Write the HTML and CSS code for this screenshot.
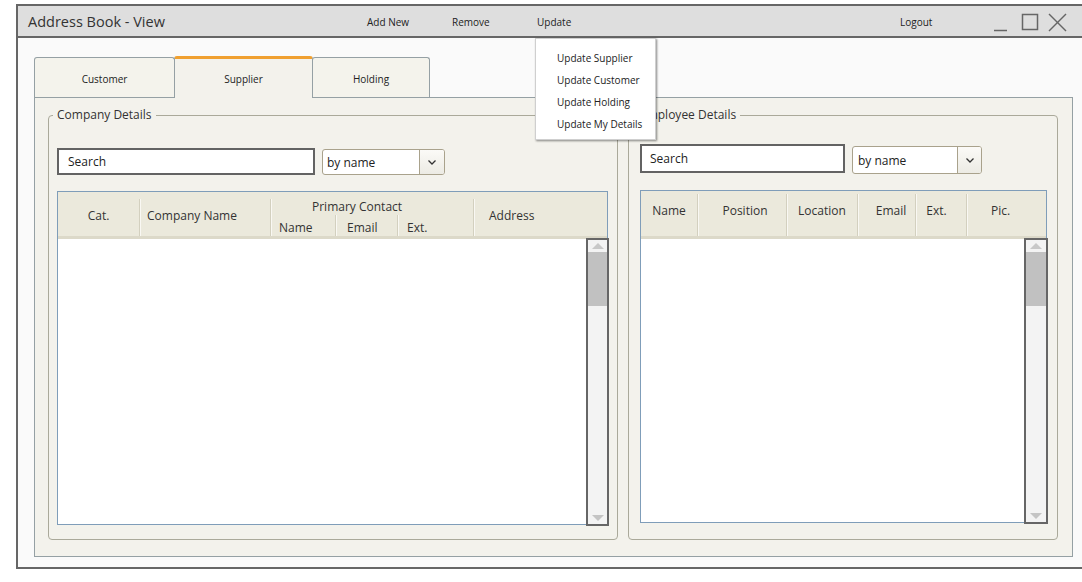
FILE: index.html
```html
<!DOCTYPE html>
<html lang="en">
<head>
<meta charset="utf-8">
<title>Address Book - View</title>
<link rel="stylesheet" href="styles.css">
</head>
<body>
<div class="window">
  <header class="titlebar">
    <div class="app-title">Address Book - View</div>
    <div class="menu-item">Add New</div>
    <div class="menu-item">Remove</div>
    <div class="menu-item menu-open">Update
      <div class="dropdown">
        <div class="dropdown-item">Update Supplier</div>
        <div class="dropdown-item">Update Customer</div>
        <div class="dropdown-item">Update Holding</div>
        <div class="dropdown-item">Update My Details</div>
      </div>
    </div>
    <div class="spacer"></div>
    <div class="menu-item logout">Logout</div>
    <svg class="win-controls" width="74" height="20" viewBox="0 0 74 20" aria-hidden="true">
      <line x1="1" y1="18.5" x2="14" y2="18.5" />
      <rect x="29.5" y="2.5" width="15" height="15" />
      <line x1="56" y1="2" x2="73" y2="19" />
      <line x1="73" y1="2" x2="56" y2="19" />
    </svg>
  </header>

  <main class="content">
    <div class="tabs">
      <div class="tab tab-customer">Customer</div>
      <div class="tab tab-supplier active">Supplier</div>
      <div class="tab tab-holding">Holding</div>
    </div>
    <div class="panel">
      <fieldset class="group group-company">
        <legend>Company Details</legend>
        <div class="toolbar">
          <div class="search">Search</div>
          <div class="select">
            <span class="select-text">by name</span>
            <span class="select-btn"><svg width="8" height="5" viewBox="0 0 8 5"><polyline points="0.5,0.5 4,4 7.5,0.5" /></svg></span>
          </div>
        </div>
        <div class="table">
          <div class="thead">
            <div class="th th-cat">Cat.</div>
            <div class="th th-company">Company Name</div>
            <div class="th th-group">
              <div class="group-title">Primary Contact</div>
              <div class="sub-row">
                <div class="sub sub-name">Name</div>
                <div class="sub sub-email">Email</div>
                <div class="sub sub-ext">Ext.</div>
              </div>
            </div>
            <div class="th th-address">Address</div>
          </div>
          <div class="tbody">
            <div class="rows"></div>
            <div class="scrollbar">
              <div class="sb-arrow"><span class="tri-up"></span></div>
              <div class="sb-thumb"></div>
              <div class="sb-track"></div>
              <div class="sb-arrow"><span class="tri-down"></span></div>
            </div>
          </div>
        </div>
      </fieldset>

      <fieldset class="group group-employee">
        <legend>Employee Details</legend>
        <div class="toolbar">
          <div class="search">Search</div>
          <div class="select">
            <span class="select-text">by name</span>
            <span class="select-btn"><svg width="8" height="5" viewBox="0 0 8 5"><polyline points="0.5,0.5 4,4 7.5,0.5" /></svg></span>
          </div>
        </div>
        <div class="table">
          <div class="thead">
            <div class="th">Name</div>
            <div class="th">Position</div>
            <div class="th">Location</div>
            <div class="th">Email</div>
            <div class="th">Ext.</div>
            <div class="th">Pic.</div>
          </div>
          <div class="tbody">
            <div class="rows"></div>
            <div class="scrollbar">
              <div class="sb-arrow"><span class="tri-up"></span></div>
              <div class="sb-thumb"></div>
              <div class="sb-track"></div>
              <div class="sb-arrow"><span class="tri-down"></span></div>
            </div>
          </div>
        </div>
      </fieldset>
    </div>
  </main>
</div>
</body>
</html>
```

FILE: styles.css
```css
html, body {
  margin: 0;
  height: 100%;
  overflow: hidden;
  background: #ffffff;
  font-family: "Open Sans", "Noto Sans", sans-serif;
  color: #333;
}

.window {
  margin: 4px 0 0 16px;
  width: 1072px;
  height: 565px;
  box-sizing: border-box;
  border: 2px solid #666;
  background: #fafafa;
  display: flex;
  flex-direction: column;
}

/* ---------- title bar ---------- */
.titlebar {
  height: 30px;
  background: #dedede;
  border-bottom: 2px solid #666;
  display: flex;
  align-items: center;
  padding: 0 19px 0 10px;
  position: relative;
  z-index: 5;
}
.app-title {
  width: 339px;
  font-size: 14.5px;
  color: #333;
  padding-top: 1px;
}
.menu-item {
  width: 85px;
  align-self: stretch;
  display: flex;
  align-items: center;
  font-size: 10px;
  color: #222;
  position: relative;
  padding-top: 1px;
}
.spacer { flex: 1; }
.logout { width: 93px; }
.win-controls {
  display: block;
  margin-top: 1px;
  fill: none;
  stroke: #666;
  stroke-width: 1.5;
}

/* dropdown menu */
.dropdown {
  position: absolute;
  left: -2px;
  top: 32px;
  width: 121px;
  height: 102px;
  box-sizing: border-box;
  background: #fff;
  border: 1px solid #cfcfcf;
  box-shadow: 1px 1px 2px rgba(0, 0, 0, 0.45);
  padding: 8px 0 0 21px;
}
.dropdown-item {
  height: 22px;
  line-height: 22px;
  font-size: 10px;
  color: #222;
  white-space: nowrap;
}

/* ---------- content ---------- */
.content {
  flex: 1;
  padding: 18px 13px 10px 16px;
}
.tabs {
  display: flex;
  align-items: flex-end;
  height: 41px;
}
.tab {
  box-sizing: border-box;
  height: 40px;
  border: 1px solid #95a0a4;
  border-bottom: none;
  border-radius: 3px 3px 0 0;
  background: #f4f3ec;
  font-size: 10px;
  color: #222;
  display: flex;
  align-items: center;
  justify-content: center;
  padding-top: 3px;
}
.tab + .tab { margin-left: -1px; }
.tab-customer { width: 141px; }
.tab-supplier { width: 139px; }
.tab-holding { width: 118px; }
.tab.active {
  height: 42px;
  margin-bottom: -1px;
  border-top: 3px solid #f0a030;
  background: #f3f2ec;
  padding-top: 0;
  position: relative;
  z-index: 1;
}

.panel {
  box-sizing: border-box;
  height: 460px;
  border: 1px solid #95a0a4;
  background: #f3f2ec;
  padding: 9px 14px 16px 13px;
  display: grid;
  grid-template-columns: 570px 430px;
  column-gap: 10px;
}

.group {
  margin: 0;
  min-width: 0;
  box-sizing: border-box;
  border: 1px solid #aaa99a;
  border-radius: 4px;
  display: flex;
  flex-direction: column;
}
.group legend {
  font-size: 12px;
  line-height: 16px;
  padding: 0 4px;
  margin-left: -4px;
  color: #333;
}
.group-company { padding: 25px 9px 14px 8px; }
.group-employee { padding: 21px 10px 16px 11px; }

.toolbar {
  display: flex;
  gap: 7px;
  height: 27px;
  margin-bottom: 16px;
}
.group-employee .toolbar {
  height: 29px;
  margin-bottom: 17px;
}
.search {
  box-sizing: border-box;
  border: 2px solid #636363;
  background: #fff;
  font-size: 12px;
  color: #222;
  display: flex;
  align-items: center;
  padding-left: 9px;
}
.group-company .search { width: 258px; }
.group-employee .search { width: 205px; padding-left: 8px; }

.select {
  box-sizing: border-box;
  border: 1px solid #a9a28c;
  border-radius: 3px;
  background: #fff;
  display: flex;
  font-size: 12px;
  color: #222;
}
.group-company .select { width: 123px; height: 26px; margin-top: 1px; }
.group-employee .select { width: 130px; height: 28px; margin-top: 2px; }
.select-text {
  flex: 1;
  display: flex;
  align-items: center;
  padding-left: 4px;
}
.group-employee .select-text { padding-left: 5px; }
.select-btn {
  box-sizing: border-box;
  width: 25px;
  border-left: 1px solid #a9a28c;
  border-radius: 0 2px 2px 0;
  background: linear-gradient(#fbfaf7, #ecebe4);
  display: flex;
  align-items: center;
  justify-content: center;
}
.group-employee .select-btn { width: 24px; }
.select-btn svg {
  fill: none;
  stroke: #333;
  stroke-width: 1.3;
}

/* ---------- tables ---------- */
.table {
  flex: 1;
  min-height: 0;
  border: 1px solid #7f9db9;
  background: #fff;
  display: flex;
  flex-direction: column;
}
.thead {
  box-sizing: border-box;
  height: 47px;
  padding-top: 7px;
  background: #ebe9dc;
  border-bottom: 3px solid #dcd9c9;
  display: flex;
  font-size: 12px;
  color: #333;
}
.group-employee .thead {
  height: 48px;
  padding-top: 3px;
}
.th {
  box-sizing: border-box;
  display: flex;
  align-items: center;
  padding-bottom: 5px;
  border-right: 1px solid #d3d0bf;
  box-shadow: 1px 0 0 #f9f8f3;
  white-space: nowrap;
}
.th:last-child {
  border-right: none;
  box-shadow: none;
  flex: 1;
}
.th-cat { width: 82px; justify-content: center; }
.th-company { width: 131px; padding-left: 7px; }
.th-group {
  width: 203px;
  padding-bottom: 0;
  flex-direction: column;
  align-items: stretch;
}
.group-title {
  height: 16px;
  line-height: 16px;
  padding-left: 41px;
}
.sub-row {
  flex: 1;
  display: flex;
}
.sub {
  box-sizing: border-box;
  display: flex;
  align-items: center;
  padding-top: 3px;
}
.sub-name { width: 65px; padding-left: 8px; border-right: 1px solid #d3d0bf; box-shadow: 1px 0 0 #f9f8f3; }
.sub-email { width: 62px; padding-left: 11px; border-right: 1px solid #d3d0bf; box-shadow: 1px 0 0 #f9f8f3; }
.sub-ext { flex: 1; padding-left: 9px; }
.th-address { padding-left: 15px; }

.group-employee .th { padding-bottom: 10px; justify-content: center; }
.group-employee .th:nth-child(1) { width: 57px; }
.group-employee .th:nth-child(2) { width: 89px; padding-left: 6px; }
.group-employee .th:nth-child(3) { width: 71px; }
.group-employee .th:nth-child(4) { width: 58px; padding-left: 9px; }
.group-employee .th:nth-child(5) { width: 51px; padding-right: 9px; }
.group-employee .th:nth-child(6) { padding-right: 12px; }

.tbody {
  flex: 1;
  min-height: 0;
  display: flex;
}
.rows { flex: 1; }
.scrollbar {
  box-sizing: border-box;
  width: 23px;
  margin: -1px -2px -2px 0;
  border: 2px solid #666;
  background: #f3f3f3;
  display: flex;
  flex-direction: column;
}
.group-employee .scrollbar { width: 24px; }
.sb-arrow {
  height: 12px;
  display: flex;
  align-items: center;
  justify-content: center;
}
.tri-up {
  width: 0;
  height: 0;
  border-left: 6px solid transparent;
  border-right: 6px solid transparent;
  border-bottom: 6px solid #c8c8c8;
}
.tri-down {
  width: 0;
  height: 0;
  border-left: 6px solid transparent;
  border-right: 6px solid transparent;
  border-top: 6px solid #c4c4c4;
}
.sb-thumb {
  height: 54px;
  background: #c1c1c1;
}
.sb-track { flex: 1; }
```
